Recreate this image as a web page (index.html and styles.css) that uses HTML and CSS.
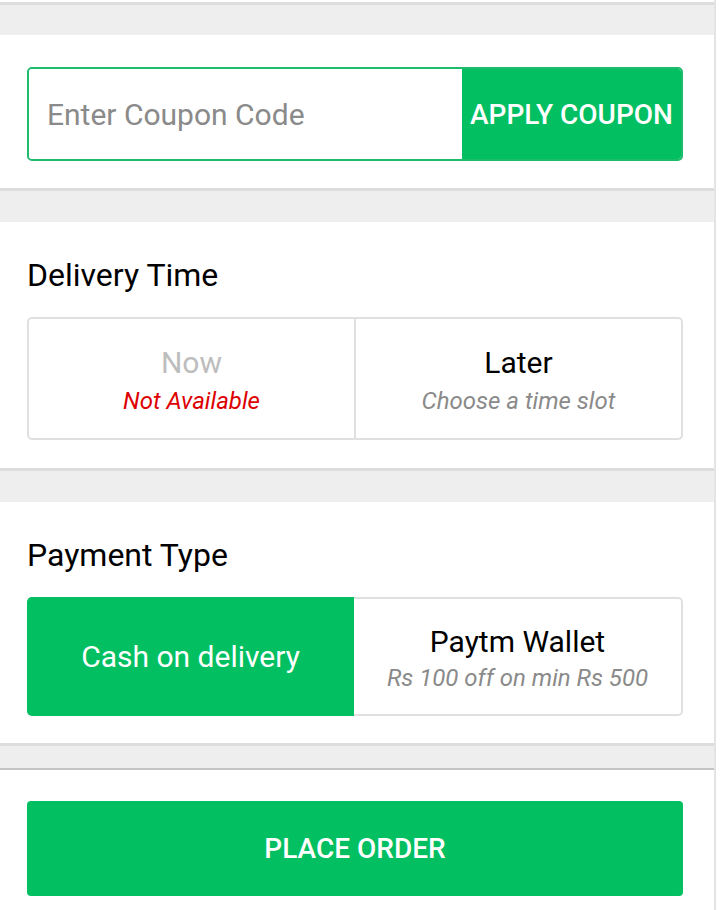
FILE: index.html
```html
<!DOCTYPE html>
<html>
<head>
  <title>Checkout</title>
  <link rel="stylesheet" href="styles.css">
</head>
<body>
  <div class='page'>
    <div class='gap first'></div>
    <div class='card coupon-card'>
      <div class='coupon'>
        <input class='coupon-input' type='text' placeholder='Enter Coupon Code'>
        <button class='coupon-btn'>APPLY COUPON</button>
      </div>
    </div>
    <div class='gap'></div>
    <div class='card'>
      <h2>Delivery Time</h2>
      <div class='choice'>
        <div class='option'>
          <span class='title muted'>Now</span>
          <span class='sub red'>Not Available</span>
        </div>
        <div class='option'>
          <span class='title'>Later</span>
          <span class='sub'>Choose a time slot</span>
        </div>
      </div>
    </div>
    <div class='gap'></div>
    <div class='card pay-card'>
      <h2>Payment Type</h2>
      <div class='choice pay'>
        <div class='option selected'>
          <span class='title'>Cash on delivery</span>
        </div>
        <div class='option'>
          <span class='title'>Paytm Wallet</span>
          <span class='sub'>Rs 100 off on min Rs 500</span>
        </div>
      </div>
    </div>
    <div class='gap last'></div>
    <div class='footer'>
      <button class='order-btn'>PLACE ORDER</button>
    </div>
  </div>
</body>
</html>
```

FILE: styles.css
```css
body, html {
  margin: 0;
  padding: 0;
  background: #fff;
  font-family: Roboto, "Noto Sans", sans-serif;
}
.page {
  width: 716px;
  border-right: 2px solid #e4e4e4;
  min-height: 910px;
  padding-top: 2px;
  box-sizing: border-box;
}
.gap {
  height: 31px;
  background: #eeeeee;
  border-top: 3px solid #dddddd;
}
.gap.first {
  height: 30px;
}
.gap.last {
  height: 22px;
  border-bottom: 2px solid #c4c4c4;
}
.card {
  background: #fff;
  padding: 0 31px 28px 27px;
}
.coupon-card {
  padding-top: 32px;
  padding-bottom: 27px;
}
.coupon {
  display: flex;
  height: 94px;
  border: 2px solid #1dbb6c;
  border-radius: 5px;
  box-sizing: border-box;
  overflow: hidden;
}
.coupon-input {
  flex: 1;
  min-width: 0;
  border: none;
  outline: none;
  padding: 0 0 0 18px;
  font-family: inherit;
  font-size: 30px;
  color: #333;
}
.coupon-input::placeholder {
  color: #8a8a8a;
}
.coupon-btn {
  width: 219px;
  border: none;
  background: #02c061;
  color: #fff;
  font-family: inherit;
  font-weight: 500;
  font-size: 28px;
  padding: 0;
}
h2 {
  margin: 0;
  padding: 35px 0 24px 0;
  font-weight: 400;
  font-size: 32px;
  line-height: 36px;
  color: #000;
}
.choice {
  display: flex;
  height: 123px;
  border: 2px solid #e0e0e0;
  border-radius: 5px;
  box-sizing: border-box;
}
.option {
  flex: 1;
  display: flex;
  flex-direction: column;
  align-items: center;
  justify-content: center;
  padding-top: 4px;
}
.option + .option {
  border-left: 2px solid #e0e0e0;
}
.title {
  font-size: 30px;
  line-height: 34px;
  color: #000;
}
.title.muted {
  color: #bdbdbd;
}
.sub {
  margin-top: 6px;
  font-size: 24px;
  line-height: 30px;
  font-style: italic;
  color: #8a8a8a;
}
.sub.red {
  color: #dd0000;
}
.pay-card {
  padding-bottom: 27px;
}
.choice.pay {
  height: 119px;
}
.choice.pay .sub {
  margin-top: 4px;
}
.choice.pay .selected {
  background: #02c061;
  margin: -2px 0 -2px -2px;
  border-radius: 5px 0 0 5px;
  padding-top: 0;
}
.choice.pay .selected .title {
  color: #fff;
}
.choice.pay .selected + .option {
  border-left: none;
}
.footer {
  padding: 31px 31px 0 27px;
}
.order-btn {
  width: 100%;
  height: 95px;
  border: none;
  border-radius: 4px;
  background: #02c061;
  color: #fff;
  font-family: inherit;
  font-weight: 500;
  font-size: 28px;
}
```
